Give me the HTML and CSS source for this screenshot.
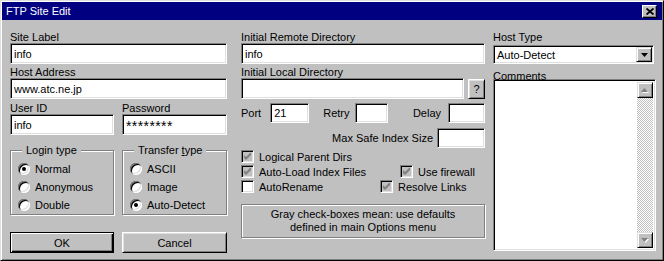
FILE: index.html
```html
<!DOCTYPE html>
<html lang="en">

<head>
    <meta charset="utf-8">
    <title>FTP Site Edit</title>
    <link rel="stylesheet" href="styles.css">
</head>

<body>
    <div class="window">
        <div class="titlebar">
            <span class="title">FTP Site Edit</span>
            <button class="close">
                <svg width="8" height="7" viewBox="0 0 8 7"><path d="M0.5 0.5 L7.5 6.5 M7.5 0.5 L0.5 6.5" stroke="#000" stroke-width="1.8" fill="none"/></svg>
            </button>
        </div>

        <div class="content">
            <!-- left column -->
            <section class="col col-left">
                <label class="field">
                    <span class="lbl">Site Label</span>
                    <input class="txt" value="info">
                </label>
                <label class="field">
                    <span class="lbl">Host Address</span>
                    <input class="txt" value="www.atc.ne.jp">
                </label>
                <div class="pair">
                    <label class="field">
                        <span class="lbl">User ID</span>
                        <input class="txt" value="info">
                    </label>
                    <label class="field">
                        <span class="lbl">Password</span>
                        <input class="txt pw" value="********">
                    </label>
                </div>
                <div class="pair groups">
                    <fieldset class="grp">
                        <legend>Login type</legend>
                        <div class="radio-row"><span class="radio on"></span>Normal</div>
                        <div class="radio-row"><span class="radio"></span>Anonymous</div>
                        <div class="radio-row"><span class="radio"></span>Double</div>
                    </fieldset>
                    <fieldset class="grp">
                        <legend>Transfer <u>t</u>ype</legend>
                        <div class="radio-row"><span class="radio"></span>ASCII</div>
                        <div class="radio-row"><span class="radio"></span>Image</div>
                        <div class="radio-row"><span class="radio on"></span>Auto-Detect</div>
                    </fieldset>
                </div>
                <div class="pair buttons">
                    <button class="btn default">OK</button>
                    <button class="btn">Cancel</button>
                </div>
            </section>

            <!-- middle column -->
            <section class="col col-mid">
                <label class="field">
                    <span class="lbl">Initial Remote Directory</span>
                    <input class="txt" value="info">
                </label>
                <div class="field">
                    <span class="lbl">Initial Local Directory</span>
                    <div class="browse">
                        <input class="txt" value="">
                        <button class="btn small">?</button>
                    </div>
                </div>
                <div class="num-row">
                    <span>Port</span>
                    <input class="txt num port" value="21">
                    <span class="retry-lbl">Retry</span>
                    <input class="txt num retry" value="">
                    <span class="delay-lbl">Delay</span>
                    <input class="txt num delay" value="">
                </div>
                <div class="max-row">
                    <span>Max Safe Index Size</span>
                    <input class="txt num maxsize" value="">
                </div>
                <div class="checks">
                    <div class="chk-row">
                        <span class="chk"><span class="box"><svg width="7" height="7" viewBox="0 0 7 7"><polygon points="0,2 2,4 6,0 7,0 7,2 2,7 0,5" fill="#808080"/></svg></span>Logical Parent Dirs</span>
                    </div>
                    <div class="chk-row">
                        <span class="chk first-wide"><span class="box"><svg width="7" height="7" viewBox="0 0 7 7"><polygon points="0,2 2,4 6,0 7,0 7,2 2,7 0,5" fill="#808080"/></svg></span>Auto-Load Index Files</span>
                        <span class="chk"><span class="box"><svg width="7" height="7" viewBox="0 0 7 7"><polygon points="0,2 2,4 6,0 7,0 7,2 2,7 0,5" fill="#808080"/></svg></span>Use firewall</span>
                    </div>
                    <div class="chk-row">
                        <span class="chk first-mid"><span class="box off"></span>AutoRename</span>
                        <span class="chk"><span class="box"><svg width="7" height="7" viewBox="0 0 7 7"><polygon points="0,2 2,4 6,0 7,0 7,2 2,7 0,5" fill="#808080"/></svg></span>Resolve Links</span>
                    </div>
                </div>
                <p class="note">Gray check-boxes mean: use defaults<br>defined in main Options menu</p>
            </section>

            <!-- right column -->
            <section class="col col-right">
                <span class="lbl">Host Type</span>
                <div class="combo">
                    <span class="combo-val">Auto-Detect</span>
                    <span class="drop">
                        <svg width="7" height="4" viewBox="0 0 7 4"><polygon points="0,0 7,0 3.5,4" fill="#000"/></svg>
                    </span>
                </div>
                <span class="lbl comments-lbl">Comments</span>
                <div class="memo">
                    <div class="memo-text"></div>
                    <div class="scroll">
                        <span class="sbtn">
                            <svg width="8" height="5" viewBox="0 0 8 5"><polygon points="1,5 8,5 4.5,1" fill="#fff"/><polygon points="0,4 7,4 3.5,0" fill="#808080"/></svg>
                        </span>
                        <span class="track"></span>
                        <span class="sbtn">
                            <svg width="8" height="5" viewBox="0 0 8 5"><polygon points="1,1 8,1 4.5,5" fill="#fff"/><polygon points="0,0 7,0 3.5,4" fill="#808080"/></svg>
                        </span>
                    </div>
                </div>
            </section>
        </div>
    </div>
</body></html>
```

FILE: styles.css
```css
* {
    box-sizing: border-box;
}

body {
    margin: 0;
    background: #c0c0c0;
    font-family: "Liberation Sans", Arial, sans-serif;
    font-size: 11px;
    color: #000;
}

.window {
    width: 664px;
    height: 261px;
    padding: 1px;
    border: 1px solid;
    border-color: #dfdfdf #000 #000 #dfdfdf;
    box-shadow: inset 1px 1px #fff, inset -1px -1px #808080;
    background: #c0c0c0;
}

.titlebar {
    display: flex;
    align-items: center;
    height: 18px;
    padding-left: 4px;
    background: #000080;
    color: #fff;
}

.title {
    font-size: 11px;
    line-height: 18px;
}

.close {
    display: flex;
    align-items: center;
    justify-content: center;
    width: 15px;
    height: 13px;
    margin: 0 5px 0 auto;
    padding: 0;
    border: 1px solid;
    border-color: #fff #000 #000 #fff;
    box-shadow: inset -1px -1px #808080;
    background: #c0c0c0;
}

.content {
    display: flex;
    padding: 9px 0 0 8px;
}

.col {
    display: flex;
    flex-direction: column;
}

.col-left {
    width: 217px;
}

.col-mid {
    width: 244px;
    margin-left: 14px;
}

.col-right {
    width: 163px;
    margin-left: 8px;
}

.field {
    display: block;
}

.lbl {
    display: block;
    height: 14px;
    padding-top: 3px;
    line-height: 11px;
    white-space: nowrap;
}

.txt {
    display: block;
    width: 100%;
    height: 21px;
    margin: 0;
    padding: 0 3px;
    border: 1px solid;
    border-color: #808080 #fff #fff #808080;
    box-shadow: inset 1px 1px #000, inset -1px -1px #dfdfdf;
    background: #fff;
    font: inherit;
    color: #000;
    outline: none;
}

.pw {
    padding-top: 3px;
    font-size: 14px;
    letter-spacing: 0.4px;
}

.pair {
    display: grid;
    grid-template-columns: 104px 105px;
    column-gap: 8px;
    margin-top: 1px;
}

.groups {
    margin-top: 9px;
}

.grp {
    margin: 0;
    padding: 3px 0 0 7px;
    min-width: 0;
    border: 1px solid #808080;
    box-shadow: inset 1px 1px #fff, 1px 1px #fff;
}

.grp legend {
    margin-left: 4px;
    padding: 0 4px;
    line-height: 13px;
    background: #c0c0c0;
}

.radio-row {
    display: flex;
    align-items: center;
    gap: 5px;
    height: 18px;
}

.radio {
    position: relative;
    width: 12px;
    height: 12px;
    border-radius: 50%;
    background: #fff;
    box-shadow: inset 1px 1px #808080, inset -1px -1px #fff, inset 2px 2px #000, inset -2px -2px #dfdfdf;
}

.radio.on::after {
    content: "";
    position: absolute;
    left: 4px;
    top: 4px;
    width: 4px;
    height: 4px;
    border-radius: 50%;
    background: #000;
}

.buttons {
    margin-top: 17px;
}

.btn {
    height: 21px;
    margin: 0;
    padding: 0;
    border: 1px solid;
    border-color: #fff #000 #000 #fff;
    box-shadow: inset 1px 1px #dfdfdf, inset -1px -1px #808080;
    background: #c0c0c0;
    font: inherit;
    color: #000;
}

.btn.default {
    border-color: #000;
    box-shadow: inset 1px 1px #fff, inset -1px -1px #000, inset -2px -2px #808080;
}

.browse {
    display: flex;
    align-items: center;
}

.browse .txt {
    flex: 1;
}

.btn.small {
    width: 17px;
    height: 20px;
    margin-left: 4px;
    flex: none;
}

.num-row {
    display: flex;
    align-items: center;
    height: 20px;
    margin-top: 4px;
}

.num {
    height: 20px;
    flex: none;
}

.port {
    width: 39px;
    margin-left: 9px;
}

.retry-lbl {
    margin-left: 14px;
}

.retry {
    width: 33px;
    margin-left: 6px;
}

.delay-lbl {
    margin-left: auto;
}

.delay {
    width: 37px;
    margin-left: 7px;
}

.max-row {
    display: flex;
    align-items: center;
    justify-content: flex-end;
    height: 20px;
    margin-top: 5px;
}

.maxsize {
    width: 48px;
    margin-left: 4px;
}

.checks {
    margin-top: 1px;
}

.chk-row {
    display: flex;
    align-items: center;
    height: 15px;
}

.chk {
    display: flex;
    align-items: center;
    gap: 5px;
    white-space: nowrap;
}

.first-wide {
    width: 159px;
}

.first-mid {
    width: 139px;
}

.box {
    display: flex;
    align-items: center;
    justify-content: center;
    width: 13px;
    height: 13px;
    border: 1px solid;
    border-color: #808080 #fff #fff #808080;
    box-shadow: inset 1px 1px #000, inset -1px -1px #dfdfdf;
    background: #c0c0c0;
}

.box.off {
    background: #fff;
}

.note {
    height: 34px;
    margin: 10px 0 0 0;
    padding: 3px 0;
    border: 1px solid #808080;
    box-shadow: inset 1px 1px #fff, 1px 1px #fff;
    text-align: center;
    line-height: 13px;
}

.combo {
    display: flex;
    align-items: center;
    height: 19px;
    margin: 2px 2px 0 0;
    padding: 1px;
    border: 1px solid;
    border-color: #808080 #fff #fff #808080;
    box-shadow: inset 1px 1px #000, inset -1px -1px #dfdfdf;
    background: #fff;
}

.combo-val {
    flex: 1;
    padding-left: 2px;
}

.drop {
    display: flex;
    align-items: center;
    justify-content: center;
    width: 16px;
    height: 15px;
    border: 1px solid;
    border-color: #dfdfdf #000 #000 #dfdfdf;
    box-shadow: inset 1px 1px #fff, inset -1px -1px #808080;
    background: #c0c0c0;
}

.comments-lbl {
    position: relative;
    z-index: 1;
    height: 15px;
    padding-top: 10px;
    line-height: 5px;
}

.memo {
    display: flex;
    height: 172px;
    padding: 2px;
    border: 1px solid;
    border-color: #808080 #fff #fff #808080;
    box-shadow: inset 1px 1px #000, inset -1px -1px #dfdfdf;
    background: #fff;
}

.memo-text {
    flex: 1;
}

.scroll {
    display: flex;
    flex-direction: column;
    width: 16px;
}

.sbtn {
    display: flex;
    align-items: center;
    justify-content: center;
    width: 16px;
    height: 16px;
    border: 1px solid;
    border-color: #dfdfdf #000 #000 #dfdfdf;
    box-shadow: inset 1px 1px #fff, inset -1px -1px #808080;
    background: #c0c0c0;
}

.track {
    flex: 1;
    background: repeating-conic-gradient(#c0c0c0 0 25%, #fff 0 50%) 0 0 / 2px 2px;
}
```
